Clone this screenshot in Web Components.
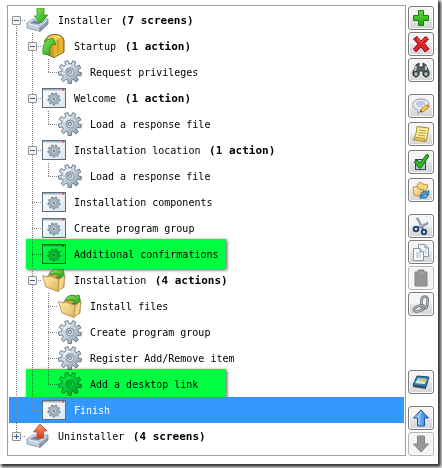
<!DOCTYPE html>
<html lang="en">
<head>
<meta charset="utf-8">
<title>Installer screens</title>
<style>
    html { height: 100%; background: #fff; overflow: hidden; }
    body { margin: 0; height: 100%; }
</style>
</head>
<body>
<installer-panel>
    <screen-tree slot="tree">
        <tree-row toggle="minus" icon="install" count="(7 screens)" label="Installer"></tree-row>
        <tree-row guides="v" toggle="minus" icon="startup" count="(1 action)" label="Startup"></tree-row>
        <tree-row guides="vve" icon="gear" label="Request privileges"></tree-row>
        <tree-row guides="v" toggle="minus" icon="screen" count="(1 action)" label="Welcome"></tree-row>
        <tree-row guides="vve" icon="gear" label="Load a response file"></tree-row>
        <tree-row guides="v" toggle="minus" icon="screen" count="(1 action)" label="Installation location"></tree-row>
        <tree-row guides="vve" icon="gear" label="Load a response file"></tree-row>
        <tree-row guides="vt" icon="screen" label="Installation components"></tree-row>
        <tree-row guides="vt" icon="screen" label="Create program group"></tree-row>
        <tree-row guides="vt" icon="screen" label="Additional confirmations" marked></tree-row>
        <tree-row guides="v" toggle="minus" icon="folder" count="(4 actions)" label="Installation"></tree-row>
        <tree-row guides="vvt" icon="folder" label="Install files"></tree-row>
        <tree-row guides="vvt" icon="gear" label="Create program group"></tree-row>
        <tree-row guides="vvt" icon="gear" label="Register Add/Remove item"></tree-row>
        <tree-row guides="vve" icon="gear" label="Add a desktop link" marked></tree-row>
        <tree-row guides="ve" icon="screen" label="Finish" selected></tree-row>
        <tree-row toggle="plus" icon="uninstall" count="(4 screens)" label="Uninstaller"></tree-row>
    </screen-tree>
    <tool-group slot="tools">
        <tool-button icon="add" label="Add"></tool-button>
        <tool-button icon="remove" label="Remove"></tool-button>
        <tool-button icon="find" label="Find"></tool-button>
    </tool-group>
    <tool-group slot="tools" loose>
        <tool-button icon="comment" label="Edit comment"></tool-button>
        <tool-button icon="note" label="Notes"></tool-button>
        <tool-button icon="check" label="Enable"></tool-button>
        <tool-button icon="group" label="Group"></tool-button>
    </tool-group>
    <tool-group slot="tools">
        <tool-button icon="cut" label="Cut"></tool-button>
        <tool-button icon="copy" label="Copy"></tool-button>
        <tool-button icon="paste" label="Paste" disabled></tool-button>
        <tool-button icon="link" label="Link"></tool-button>
    </tool-group>
    <tool-group slot="tools" bottom>
        <tool-button icon="preview" label="Preview"></tool-button>
    </tool-group>
    <tool-group slot="tools">
        <tool-button icon="up" label="Move up"></tool-button>
        <tool-button icon="down" label="Move down" disabled></tool-button>
    </tool-group>
</installer-panel>

<script>
// Gear outline: teeth around a circle
function gearPath(cx, cy, outer, inner, teeth) {
    const pts = [];
    for (let i = 0; i < teeth; i++) {
        const a = (i / teeth) * Math.PI * 2 + 0.2;
        const w = Math.PI / teeth;
        [[-0.6, inner], [-0.42, outer], [0.42, outer], [0.6, inner]].forEach(([k, r]) => {
            pts.push((cx + Math.cos(a + k * w) * r).toFixed(2) + ' ' + (cy + Math.sin(a + k * w) * r).toFixed(2));
        });
    }
    return 'M' + pts.join('L') + 'Z';
}

const DEFS = `
    <defs>
        <linearGradient id="steel" x1="0" y1="0" x2="1" y2="1"><stop offset="0" stop-color="#e8eef4"/><stop offset=".5" stop-color="#c3ced9"/><stop offset="1" stop-color="#7d8e9f"/></linearGradient>
        <linearGradient id="hub" x1="0" y1="0" x2="1" y2="1"><stop offset="0" stop-color="#8fa1b3"/><stop offset="1" stop-color="#eef4fa"/></linearGradient>
        <linearGradient id="pane" x1="0" y1="0" x2="1" y2="1"><stop offset="0" stop-color="#ffffff"/><stop offset="1" stop-color="#dbe4ec"/></linearGradient>
        <linearGradient id="green" x1="0" y1="0" x2="1" y2="1"><stop offset="0" stop-color="#8eec5c"/><stop offset="1" stop-color="#20961c"/></linearGradient>
        <linearGradient id="plus" x1="0" y1="0" x2="0" y2="1"><stop offset="0" stop-color="#5fd83a"/><stop offset="1" stop-color="#23a316"/></linearGradient>
        <linearGradient id="red" x1="0" y1="0" x2="0" y2="1"><stop offset="0" stop-color="#ff9a68"/><stop offset="1" stop-color="#d83a1c"/></linearGradient>
        <linearGradient id="gold" x1="0" y1="0" x2="1" y2="1"><stop offset="0" stop-color="#fff0b4"/><stop offset="1" stop-color="#e3b257"/></linearGradient>
        <linearGradient id="blue" x1="0" y1="0" x2="1" y2="0"><stop offset="0" stop-color="#a4d4ff"/><stop offset="1" stop-color="#2877dc"/></linearGradient>
    </defs>`;

const TRAY = `
    <path d="M1 15L7 11H22L14 18Z" fill="#dfe7ee" stroke="#8496a8" stroke-width=".8"/>
    <path d="M4 15L8 12.500H18.500L13 16.500Z" fill="#71879b"/>
    <path d="M1 15L14 18V23.500L1 20Z" fill="#c4d2df" stroke="#7589a0" stroke-width=".7"/>
    <path d="M14 18L22 11V16L14 23.500Z" fill="#8a9db1" stroke="#61778e" stroke-width=".7"/>
    <path d="M2 15.500L14 18.500L21.500 12" fill="none" stroke="#f7fbff"/>`;

const ROW_ICONS = {
    install: TRAY + '<path d="M11 0H18V7H22L15 15L8 8H11Z" fill="url(#green)" stroke="#35a12a" stroke-width=".8"/>',
    uninstall: TRAY + '<path d="M14 0L21 7H17.500V14H11V8H7.500Z" fill="url(#red)" stroke="#b94325" stroke-width=".8"/>',
    startup: `
        <path d="M3 8Q4 1 12 .500Q20 0 22 6V18L12 23.500L2 19Z" fill="#d69b22" stroke="#805b10"/>
        <path d="M12 8Q14 3 21 5V18L12 23Z" fill="#e9b431"/>
        <path d="M4 7Q7 1 13 1Q18 1 20 4Q14 4 12 9Z" fill="#f7d368"/>
        <path d="M16 6V19" stroke="#bd861b"/>
        <path d="M1 20Q0 10 4 8L2 7L11 4L14 11L11 10Q7 13 8 21Z" fill="url(#green)" stroke="#278b24" stroke-width=".8"/>`,
    gear: `
        <path d="${gearPath(12, 12, 11.6, 8.4, 9)}" fill="url(#steel)" stroke="#617283" stroke-width=".9" stroke-linejoin="round"/>
        <path d="M6 10Q7.500 5.500 12.500 5.500" fill="none" stroke="#fff" stroke-width="1.200"/>
        <circle cx="12" cy="12" r="4" fill="url(#hub)" stroke="#7c8d9e" stroke-width=".8"/>
        <circle cx="12" cy="12" r="1.500" fill="#fff" stroke="#5c6e80" stroke-width=".9"/>`,
    screen: `
        <rect x=".5" y="2.500" width="23" height="19" fill="url(#pane)" stroke="#5c6f80"/>
        <path d="M1 3H23V4.500H1Z" fill="#a4b4c3"/>
        <path d="M20 3H22V4.500H20Z" fill="#df5542"/>
        <path d="${gearPath(12, 13, 6.2, 4.6, 9)}" fill="#a5b4c2" stroke="#627485" stroke-width=".7"/>
        <circle cx="12" cy="13" r="2.400" fill="#d4dee7" stroke="#7c8d9e" stroke-width=".5"/>
        <circle cx="12" cy="13" r="1" fill="#44576a"/>`,
    folder: `
        <path d="M5 9L9 4L13 6L22 8V19L15 23Z" fill="#d6a448" stroke="#8c6a2c" stroke-width=".7"/>
        <path d="M7 6Q11 -1 18 2L21 1L23 10L14 10L17 8Q13 4 10 7Z" fill="url(#green)" stroke="#237b22" stroke-width=".8"/>
        <path d="M.500 7.500L6 9L8 8L17 11.500L16 23.500L4 19Z" fill="url(#gold)" stroke="#b08a45" stroke-width=".8"/>
        <path d="M17 11.500L23 7L21.500 19L16 23.500Z" fill="#f3d488" stroke="#b08a45" stroke-width=".7"/>`
};

// Toolbar icons share an 18px canvas
const TOOL_ICONS = {
    add: '<path d="M6.500 1.500H11.500V6.500H16.500V11.500H11.500V16.500H6.500V11.500H1.500V6.500H6.500Z" fill="url(#plus)" stroke="#157f13"/>',
    remove: '<path d="M1.500 4L5 1.500L9 6L13.500 1.500L16.500 4L12.500 8.500L17 14L13 17L9 12L4 17L1.500 14L6 9Z" fill="#dc232a" stroke="#8d1015"/><path d="M5 3L9 7.500L13.500 3" fill="none" stroke="#f4686a"/>',
    find: '<path d="M4 4L7 2V6H11V2L14 4L17 11V14Q14 18 11 14V10H7V14Q4 18 1 14V11Z" fill="#596066" stroke="#30363b"/><path d="M4 5L3 10M14 5V9" stroke="#b8c1c7" stroke-width="2"/><circle cx="4" cy="13" r="2.500" fill="#9ab9b0" stroke="#252b31"/><circle cx="14" cy="13" r="2.500" fill="#9ab9b0" stroke="#252b31"/>',
    comment: '<path d="M9 2C3 2 0 5 1 9Q2 12 6 13L6 17L10 13Q17 12 17 7Q16 2 9 2Z" fill="#e3edf6" stroke="#8a9cae"/><path d="M5 5H13M4 7H13M5 9H10" stroke="#99acbd"/><path d="M8 15L9 12L14 8L17 10L11 15Z" fill="#f2cb4b" stroke="#a27328" stroke-width=".8"/><path d="M14 8L16 7L18 9L17 10Z" fill="#db896b"/><path d="M8 15L9 13L10 15Z" fill="#333"/>',
    note: '<path d="M5 1.500L17 3L14 16.500L1 14.500Q4 13 5 1.500Z" fill="#fbec9c" stroke="#a88d38"/><path d="M1 14.500Q4 14 4 12L13 13.500L13 16.500Z" fill="#e6c456" stroke="#a88d38" stroke-width=".7"/><path d="M7 5L14 6M6.500 7.500L13.500 8.500M6 10L13 11" stroke="#b89b42"/>',
    check: '<rect x="3.500" y="6.500" width="10" height="10" fill="#b9c8d3" stroke="#354756"/><path d="M2 9L5 7L8 10L15 1L17 3L9 15H7Z" fill="#37b52a" stroke="#126c18"/>',
    group: '<path d="M5 4L8 1L11 3L16 4L14 11L6 12Z" fill="#f4d67c" stroke="#aa8136" stroke-width=".8"/><path d="M1 6L5 6L7 8L12 9L10 16L2 14Z" fill="url(#gold)" stroke="#aa8136" stroke-width=".8"/><path d="M9 12Q12 8 15 11L17 9V14H12L14 12.500Q12 11 9 12ZM8 13H13L11 15Q13 17 16 14Q15 19 10 17L8 18Z" fill="#3c91c9" stroke="#286895" stroke-width=".5"/>',
    cut: '<path d="M5 1L11 12M16 6L5 11" stroke="#677b8d" stroke-width="2.200"/><path d="M5 2L10 10M15 6L6 10" stroke="#d5dee5" stroke-width=".8"/><circle cx="4" cy="12" r="2.300" fill="none" stroke="#27467d" stroke-width="2"/><circle cx="12" cy="15" r="2.200" fill="none" stroke="#27467d" stroke-width="2"/>',
    copy: '<path d="M6.500 1.500H13L16.500 5V13.500H6.500Z" fill="#f5f8fb" stroke="#8396a7"/><path d="M13 1.500V5H16.500" fill="#c1d0dd" stroke="#8396a7"/><path d="M1.500 5.500H8L11.500 9V17.500H1.500Z" fill="#fafcff" stroke="#8396a7"/><path d="M8 5.500V9H11.500" fill="#c1d0dd" stroke="#8396a7"/><path d="M4 10H8M4 12H9M4 14H9M12 8H14M13 10H15" stroke="#a5b3bf"/>',
    paste: '<path d="M3 3H6V1H12V3H15V17H3Z" fill="#969696" stroke="#858585"/><path d="M6 4H12" stroke="#ababab"/>',
    link: '<g fill="none"><rect x="9.500" y="1.500" width="6" height="12" rx="3" transform="rotate(6 12 7)" stroke="#66757f" stroke-width="2.600"/><rect x="9.500" y="1.500" width="6" height="12" rx="3" transform="rotate(6 12 7)" stroke="#c4ced5" stroke-width=".8"/><ellipse cx="7" cy="13.500" rx="5.500" ry="2.600" transform="rotate(-20 7 13.500)" stroke="#66757f" stroke-width="2.400"/><ellipse cx="7" cy="13.500" rx="5.500" ry="2.600" transform="rotate(-20 7 13.500)" stroke="#c4ced5" stroke-width=".8"/></g>',
    preview: '<path d="M5 3L17 4L14 14L1 12Z" fill="#377caa" stroke="#244e74"/><path d="M6 5L15 6L13 11L3 10Z" fill="#9ad7ed"/><path d="M3 10L6 7L9 9L12 6L13 11Z" fill="#dcebb8"/><path d="M11 5L14 6L13 9L10 8Z" fill="#e2b54d"/><path d="M1 12L14 14V16L1 14Z" fill="#304e69"/>',
    up: '<path d="M9 1L16.500 9H12.500V17H5.500V9H1.500Z" fill="url(#blue)" stroke="#1c59a8"/><path d="M9 3L7 7V15" fill="none" stroke="#d6edff" stroke-width=".8"/>',
    down: '<path d="M5.500 1H12.500V9H16.500L9 17L1.500 9H5.500Z" fill="#989898" stroke="#858585"/>'
};

class InstallerPanel extends HTMLElement {
    constructor() {
        super();
        this.attachShadow({ mode: 'open' });
    }

    connectedCallback() {
        this.shadowRoot.innerHTML = `
            <style>
                :host {
                    display: block;
                    padding: 0 4px 4px 0;
                }
                .panel {
                    display: flex;
                    gap: 2px;
                    padding: 5px 4px 8px 7px;
                    background: #fff;
                    box-shadow: 2px 2px 3px 1px #333;
                }
                .tree {
                    flex: 1;
                    min-width: 0;
                }
                .tools {
                    display: flex;
                    flex-direction: column;
                    gap: 12px;
                    padding-top: 1px;
                }
            </style>
            <div class="panel">
                <div class="tree"><slot name="tree"></slot></div>
                <div class="tools" role="toolbar"><slot name="tools"></slot></div>
            </div>
        `;
    }
}

class ScreenTree extends HTMLElement {
    constructor() {
        super();
        this.attachShadow({ mode: 'open' });
    }

    connectedCallback() {
        this.shadowRoot.innerHTML = `
            <style>
                :host {
                    display: block;
                    padding: 1px 1px 6px;
                    border: 1px solid #a0a0a0;
                    font-family: "DejaVu Sans Mono", "Liberation Mono", monospace;
                    font-size: 10px;
                    color: #000;
                }
            </style>
            <div role="tree"><slot></slot></div>
        `;
    }
}

class TreeRow extends HTMLElement {
    constructor() {
        super();
        this.attachShadow({ mode: 'open' });
    }

    connectedCallback() {
        this.render();
    }

    render() {
        const guides = this.getAttribute('guides') || '';
        const toggle = this.getAttribute('toggle');
        const count = this.getAttribute('count');
        const label = this.getAttribute('label');

        // v = line through, t = line with a branch, e = last branch
        let cells = '';
        for (const g of guides) {
            cells += `<span class="cell ${g}"></span>`;
        }
        if (toggle) {
            const edge = toggle === 'plus' ? 'e' : guides ? 't' : 'first';
            cells += `<span class="cell ${edge}"><button class="${toggle}" aria-label="Toggle ${label}"></button></span>`;
        }

        this.shadowRoot.innerHTML = `
            <style>
                :host {
                    display: block;
                    position: relative;
                }
                .row {
                    display: flex;
                    align-items: center;
                    box-sizing: border-box;
                    height: 26px;
                    white-space: pre;
                }
                :host([selected]) .row {
                    background: #3399ff;
                    color: #fff;
                    outline: 1px dotted #b07040;
                    outline-offset: -1px;
                }
                .cell {
                    flex: none;
                    display: flex;
                    align-items: center;
                    width: 16px;
                    height: 26px;
                    --dots: repeating-linear-gradient(to bottom, #848484 0 1px, transparent 1px 2px);
                    --dash: repeating-linear-gradient(to right, #848484 0 1px, transparent 1px 2px);
                    background-repeat: no-repeat;
                }
                .v {
                    background-image: var(--dots);
                    background-position: 7px 0;
                    background-size: 1px 26px;
                }
                .t, .e, .first {
                    background-image: var(--dots), var(--dash);
                    background-position: 7px 0, 7px 13px;
                    background-size: 1px 26px, 9px 1px;
                }
                .e {
                    background-size: 1px 13px, 9px 1px;
                }
                .first {
                    background-position: 7px 13px, 7px 13px;
                    background-size: 1px 13px, 9px 1px;
                }
                button {
                    box-sizing: border-box;
                    width: 9px;
                    height: 9px;
                    margin: 0 0 0 3px;
                    padding: 0;
                    border: 1px solid #919191;
                    border-radius: 1px;
                    background: linear-gradient(#3a5a9a, #3a5a9a) center / 5px 1px no-repeat, #f6f6f6;
                }
                button.plus {
                    background: linear-gradient(#3a5a9a, #3a5a9a) center / 5px 1px no-repeat,
                        linear-gradient(#3a5a9a, #3a5a9a) center / 1px 5px no-repeat, #f6f6f6;
                }
                svg {
                    flex: none;
                    width: 24px;
                    height: 24px;
                    margin: 0 8px 0 1px;
                }
                b {
                    padding-left: 2px;
                    font-size: 11px;
                }
                /* Highlighter laid over the row */
                .marker {
                    position: absolute;
                    top: -2px;
                    bottom: -2px;
                    left: 17px;
                    width: 200px;
                    background: #00ff40;
                    box-shadow: 1px 1px 3px #555;
                    mix-blend-mode: multiply;
                    pointer-events: none;
                }
            </style>
            <div class="row" role="treeitem">${cells}<svg viewBox="0 0 24 24" aria-hidden="true">${DEFS}${ROW_ICONS[this.getAttribute('icon')]}</svg><span>${label}</span>${count ? `<b> ${count}</b>` : ''}</div>
            ${this.hasAttribute('marked') ? '<div class="marker"></div>' : ''}
        `;
    }
}

class ToolGroup extends HTMLElement {
    constructor() {
        super();
        this.attachShadow({ mode: 'open' });
    }

    connectedCallback() {
        this.shadowRoot.innerHTML = `
            <style>
                :host {
                    display: flex;
                    flex-direction: column;
                    gap: 2px;
                }
                :host([loose]) { gap: 4px; }
                :host([bottom]) { margin-top: auto; }
            </style>
            <slot></slot>
        `;
    }
}

class ToolButton extends HTMLElement {
    constructor() {
        super();
        this.attachShadow({ mode: 'open' });
    }

    connectedCallback() {
        const disabled = this.hasAttribute('disabled') ? 'disabled' : '';
        this.shadowRoot.innerHTML = `
            <style>
                :host {
                    display: block;
                }
                button {
                    display: flex;
                    align-items: center;
                    justify-content: center;
                    box-sizing: border-box;
                    width: 26px;
                    height: 24px;
                    padding: 0;
                    border: 1px solid #7c7c7c;
                    border-radius: 3px;
                    background: linear-gradient(#f4f4f4 0 45%, #e4e4e4 55%, #d4d4d4);
                    box-shadow: inset 0 0 0 1px #fafafa;
                }
                button:disabled {
                    border-color: #b4b4b4;
                    background: #f4f4f4;
                }
                svg {
                    width: 18px;
                    height: 18px;
                }
            </style>
            <button type="button" aria-label="${this.getAttribute('label')}" ${disabled}>
                <svg viewBox="0 0 18 18" aria-hidden="true">${DEFS}${TOOL_ICONS[this.getAttribute('icon')]}</svg>
            </button>
        `;
    }
}

customElements.define('installer-panel', InstallerPanel);
customElements.define('screen-tree', ScreenTree);
customElements.define('tree-row', TreeRow);
customElements.define('tool-group', ToolGroup);
customElements.define('tool-button', ToolButton);
</script>
</body>
</html>
